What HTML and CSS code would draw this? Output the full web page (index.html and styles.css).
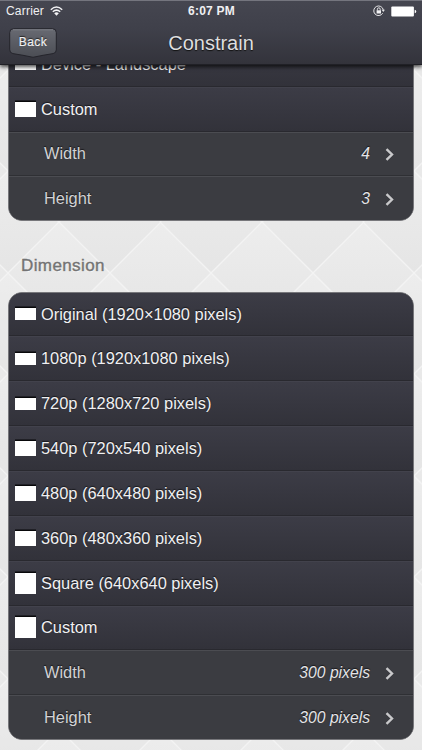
FILE: index.html
```html
<!DOCTYPE html>
<html lang="en">
<head>
    <meta charset="UTF-8">
    <meta name="viewport" content="width=device-width, initial-scale=1.0">
    <title>Constrain</title>
    <link rel="stylesheet" href="styles.css">
</head>
<body>
    <header class="topbar">
        <div class="status">
            <div class="carrier">
                <span>Carrier</span>
                <svg width="13" height="10" viewBox="0 0 13 10">
                    <path d="M.8 3.7Q6.5-1.7 12.2 3.7M2.8 5.8Q6.5 2.4 10.2 5.8" fill="none" stroke="#f2f2f4" stroke-width="1.5"/>
                    <path d="M4.2 7.3Q6.5 5.2 8.8 7.3L6.5 9.7z" fill="#f2f2f4"/>
                </svg>
            </div>
            <div class="clock">6:07 PM</div>
            <div class="indicators">
                <svg width="12" height="12" viewBox="0 0 12 12">
                    <path d="M9.7 8.2A4.8 4.8 0 1 1 10.3 5" fill="none" stroke="#e4e4e6" stroke-width="1"/>
                    <path d="M8.6 4.8h3.3L10.3 7z" fill="#e4e4e6"/>
                    <rect x="3.6" y="5.3" width="4.4" height="3.2" fill="#f2f2f4"/>
                    <path d="M4.4 5.5V4.2a1.4 1.4 0 0 1 2.8 0v1.3" fill="none" stroke="#f2f2f4" stroke-width=".9"/>
                </svg>
                <svg width="26" height="11" viewBox="0 0 26 11">
                    <rect x=".3" y=".5" width="22.6" height="10" rx="1" fill="#fff"/>
                    <path d="M23.7 3.7q1.5.3 1.5 1.8t-1.5 1.8z" fill="#fff"/>
                </svg>
            </div>
        </div>
        <div class="navbar">
            <button class="back">
                <svg width="48" height="30" viewBox="0 0 48 30">
                    <defs>
                        <linearGradient id="back-fill" x1="0" y1="0" x2="0" y2="1">
                            <stop offset="0" stop-color="#686a72"/>
                            <stop offset="1" stop-color="#4b4d54"/>
                        </linearGradient>
                    </defs>
                    <path d="M4.5.7h39q3.8 0 3.8 3.8v17.3q0 3.2-3.2 3.8L34 27.3 24 29.3l-10-2L3.9 25.6Q.7 25 .7 21.8V4.5Q.7.7 4.5.7z" fill="url(#back-fill)" stroke="#24242b"/>
                    <path d="M4 1.8h40" stroke="#85878e" stroke-width=".8"/>
                </svg>
                <span>Back</span>
            </button>
            <h1>Constrain</h1>
        </div>
    </header>

    <main class="content">
        <ul class="group ratio">
            <li class="row"><i class="shape wide"></i>Device - Landscape</li>
            <li class="row"><i class="shape std"></i>Custom</li>
            <li class="row sub">Width <em>4</em><svg class="chevron" viewBox="0 0 9 13"><path d="M1.5 1.2 7 6.5 1.5 11.8"/></svg></li>
            <li class="row sub">Height <em>3</em><svg class="chevron" viewBox="0 0 9 13"><path d="M1.5 1.2 7 6.5 1.5 11.8"/></svg></li>
        </ul>

        <h2>Dimension</h2>
        <ul class="group">
            <li class="row"><i class="shape wide"></i>Original (1920×1080 pixels)</li>
            <li class="row"><i class="shape wide"></i>1080p (1920x1080 pixels)</li>
            <li class="row"><i class="shape wide"></i>720p (1280x720 pixels)</li>
            <li class="row"><i class="shape std"></i>540p (720x540 pixels)</li>
            <li class="row"><i class="shape std"></i>480p (640x480 pixels)</li>
            <li class="row"><i class="shape std"></i>360p (480x360 pixels)</li>
            <li class="row"><i class="shape square"></i>Square (640x640 pixels)</li>
            <li class="row"><i class="shape square"></i>Custom</li>
            <li class="row sub">Width <em>300 pixels</em><svg class="chevron" viewBox="0 0 9 13"><path d="M1.5 1.2 7 6.5 1.5 11.8"/></svg></li>
            <li class="row sub">Height <em>300 pixels</em><svg class="chevron" viewBox="0 0 9 13"><path d="M1.5 1.2 7 6.5 1.5 11.8"/></svg></li>
        </ul>
    </main>
</body>
</html>
```
FILE: styles.css
```css
* {
    box-sizing: border-box;
}
body {
    margin: 0;
    height: 750px;
    overflow: hidden;
    display: flex;
    flex-direction: column;
    font-family: "Liberation Sans", Arial, sans-serif;
    color: #f0f0f2;
    /* diamond pattern: one shaded diamond per tile, its neighbours in the corners */
    background-color: #eaeaea;
    background-image:
        url("data:image/svg+xml,%3Csvg xmlns='http://www.w3.org/2000/svg' viewBox='0 0 100 100'%3E%3ClinearGradient id='g' x2='0' y2='1'%3E%3Cstop stop-color='%23ededed'/%3E%3Cstop offset='1' stop-color='%23e5e5e5'/%3E%3C/linearGradient%3E%3Cpath d='M50 0 100 50 50 100 0 50z' fill='url(%23g)' stroke='%23f3f3f3' stroke-width='1.3'/%3E%3C/svg%3E"),
        linear-gradient(#e9e9e9, #e5e5e5 50%, #ededed 50%, #e9e9e9);
    background-size: 101.5px 101.5px;
    background-position: 8.25px 222px;
}

/* top bar */
.topbar {
    position: relative;
    z-index: 1;
    flex: none;
    height: 65px;
    background: linear-gradient(#454650, #3f404a 45%, #33333b);
    border-top: 1px solid #74757e;
    border-bottom: 1px solid #202026;
    box-shadow: 0 2px 4px rgba(0, 0, 0, .7);
}
.status {
    height: 20px;
    padding: 0 5px 0 6px;
    display: grid;
    grid-template-columns: 1fr auto 1fr;
    align-items: center;
    font-size: 12px;
}
.carrier,
.indicators {
    display: flex;
    align-items: center;
    gap: 6px;
    letter-spacing: .2px;
}
.indicators {
    justify-content: flex-end;
}
.clock {
    font-weight: bold;
    letter-spacing: .2px;
}
.navbar {
    height: 43px;
    padding: 0 9px;
    display: grid;
    grid-template-columns: 48px 1fr 48px;
    align-items: center;
}
.back {
    display: grid;
    place-items: center;
    padding: 0;
    border: 0;
    background: none;
    color: #f0f0f2;
    font: 12px "Liberation Sans", Arial, sans-serif;
    letter-spacing: .4px;
    -webkit-text-stroke: .2px;
    text-shadow: 0 -1px 1px #222;
}
.back svg,
.back span {
    grid-area: 1 / 1;
}
.back span {
    margin-bottom: 2px;
}
h1 {
    margin: 2px 0 0;
    text-align: center;
    font-size: 20px;
    font-weight: normal;
    color: #dededf;
    text-shadow: 0 1px 1px #111;
}

/* grouped lists */
.content {
    flex: 1;
    min-height: 0;
    overflow: hidden;
    padding: 0 8px;
}
h2 {
    height: 71px;
    margin: 0;
    padding: 19px 0 0 13px;
    font-size: 17px;
    font-weight: normal;
    letter-spacing: .4px;
    line-height: 52px;
    color: #737373;
    -webkit-text-stroke: .4px;
    text-shadow: 0 1px 0 #fff;
}
.group {
    list-style: none;
    margin: 0;
    padding: 0;
    border: 1px solid #77777b;
    border-radius: 14px;
    overflow: hidden;
    background: #3b3c41;
}
.ratio {
    margin-top: -22.8px;
}
.row {
    display: flex;
    align-items: center;
    height: 44.85px;
    padding: 0 19px 0 6px;
    font-size: 16.4px;
    background: linear-gradient(#3c3c46, #32323a);
    border-top: 1px solid #42424c;
    border-bottom: 1px solid #29292f;
    text-shadow: 0 -1px 1px #17171b;
}
.row:first-child {
    height: 43.5px;
    border-top: 0;
}
.shape {
    width: 21px;
    margin-right: 5px;
    background: #fff;
    box-shadow: 0 -1.5px 0 #08080a;
}
.wide {
    height: 12px;
}
.std {
    height: 15px;
}
.square {
    height: 21px;
}
.sub {
    padding-left: 35px;
    color: #d2d2d4;
    background: #3b3c41;
    border-top-color: #4b4c51;
    border-bottom-color: #2f3034;
}
.sub:last-child {
    height: 43.6px;
    border-bottom: 0;
}
.sub em {
    margin: 1px 0 0 auto;
    font-size: 15.7px;
    color: #e4e4e6;
}
.chevron {
    width: 9px;
    height: 13px;
    margin: 1px 0 0 15px;
    fill: none;
    stroke: #c9c9cb;
    stroke-width: 2.4;
}
```
